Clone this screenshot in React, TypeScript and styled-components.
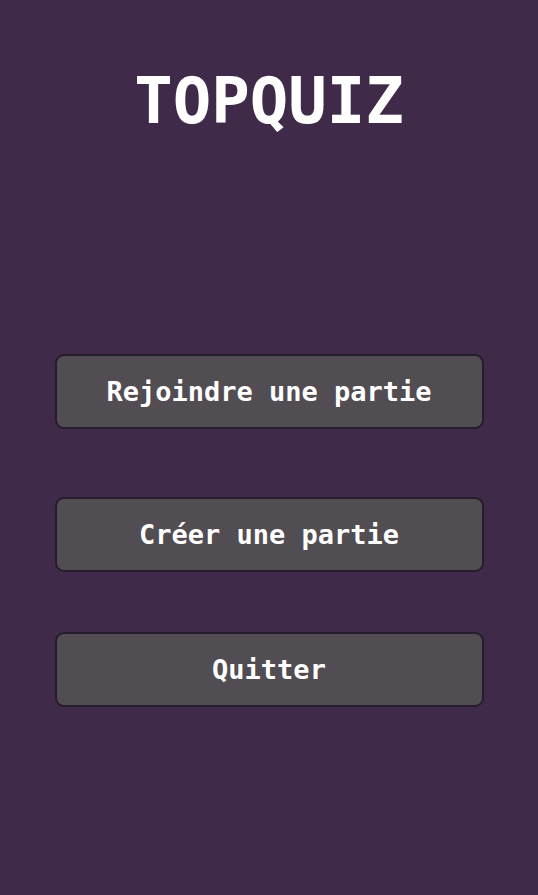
import React from "react";
import styled, { createGlobalStyle } from "styled-components";

const Global = createGlobalStyle`
  html, body { margin: 0; padding: 0; background: #3f2a4a; }
  body { font-family: "DejaVu Sans Mono", "Liberation Mono", monospace; }
`;

const Screen = styled.div`
  width: 538px;
  height: 895px;
  background: #3f2a4a;
  display: flex;
  flex-direction: column;
  align-items: center;
  box-sizing: border-box;
`;

const Title = styled.h1`
  margin: 62px 0 0;
  font-size: 64px;
  line-height: 78px;
  font-weight: bold;
  color: #ffffff;
  letter-spacing: 0px;
`;

const Menu = styled.div`
  display: flex;
  flex-direction: column;
  width: 429px;
  margin-top: 214px;
`;

const MenuButton = styled.button<{ $gap: number }>`
  margin-top: ${(p) => p.$gap}px;
  height: 75px;
  width: 100%;
  box-sizing: border-box;
  background: #524c53;
  border: 2px solid #251d2a;
  border-radius: 9px;
  color: #ffffff;
  font-family: "DejaVu Sans Mono", "Liberation Mono", monospace;
  font-weight: bold;
  font-size: 27px;
  cursor: pointer;
`;

export default function App() {
  return (
    <Screen>
      <Global />
      <Title>TOPQUIZ</Title>
      <Menu>
        <MenuButton $gap={0}>Rejoindre une partie</MenuButton>
        <MenuButton $gap={68}>Créer une partie</MenuButton>
        <MenuButton $gap={60}>Quitter</MenuButton>
      </Menu>
    </Screen>
  );
}
